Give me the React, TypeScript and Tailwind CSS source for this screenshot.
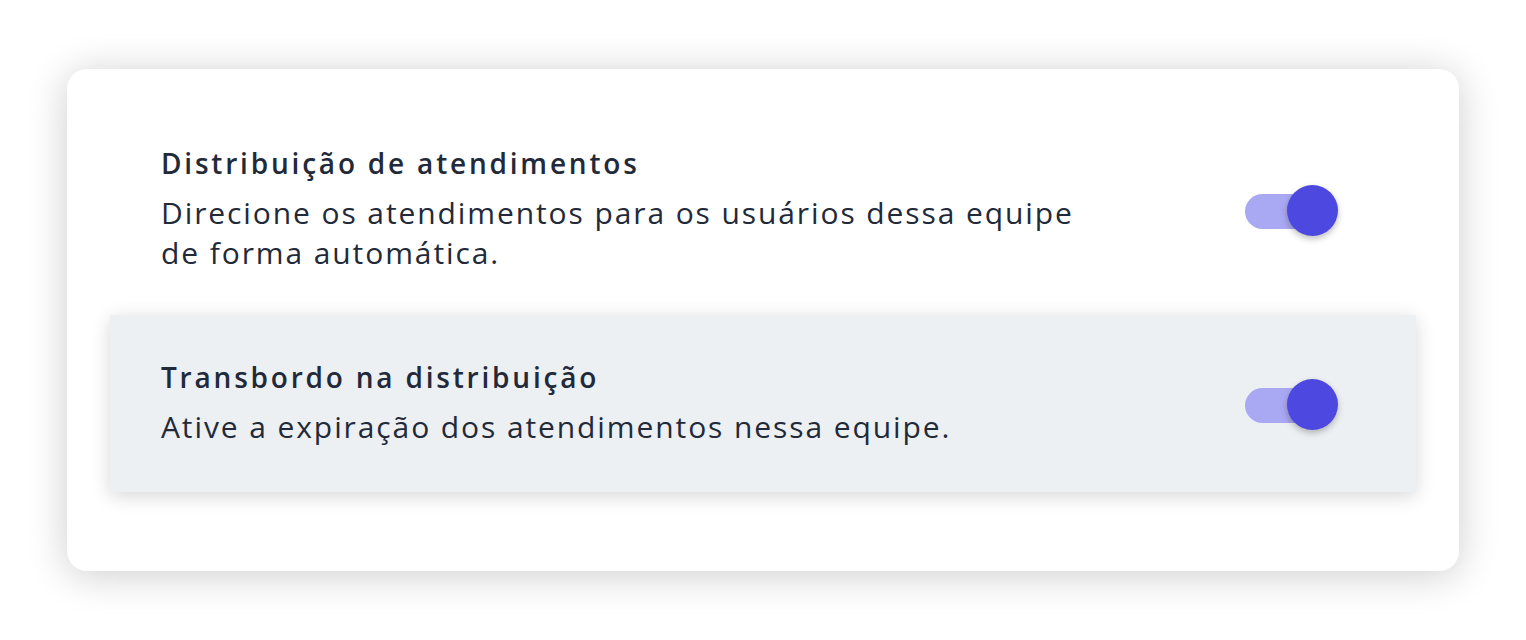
import React, { useState } from "react";

function Toggle({ on, onChange }: { on: boolean; onChange: () => void }) {
  return (
    <button
      onClick={onChange}
      className="relative w-[93px] h-[52px] mt-[6px] flex items-center shrink-0"
    >
      <span
        className={`w-[70px] h-[35px] rounded-full ${
          on ? "bg-[#a9a8f2]" : "bg-[#d3d6dc]"
        }`}
      ></span>
      <span
        className={`absolute top-0 w-[51px] h-[51px] rounded-full shadow-[0_3px_6px_rgba(0,0,0,0.25)] ${
          on ? "left-[42px] bg-[#4c48e0]" : "left-0 bg-white"
        }`}
      ></span>
    </button>
  );
}

function Row({
  title,
  desc,
  on,
  onChange,
  highlight,
}: {
  title: string;
  desc: string;
  on: boolean;
  onChange: () => void;
  highlight?: boolean;
}) {
  return (
    <div
      className={`flex items-center justify-between pl-[51px] pr-[78px] ${
        highlight
          ? "bg-[#edf0f3] shadow-[0_4px_18px_rgba(0,0,0,0.16)] pt-[42px] pb-[45px]"
          : "pt-[42px] pb-[42px]"
      }`}
    >
      <div className="flex flex-col gap-[10px] text-[#222a3a]">
        <p className="text-[28px] leading-[40px] font-semibold tracking-[2.8px]">
          {title}
        </p>
        <p className="text-[30px] leading-[40px] tracking-[1.9px] max-w-[930px]">
          {desc}
        </p>
      </div>
      <Toggle on={on} onChange={onChange} />
    </div>
  );
}

export default function App() {
  const [dist, setDist] = useState(true);
  const [overflow, setOverflow] = useState(true);
  return (
    <div
      className="w-[1526px] h-[640px] bg-white pt-[69px] pl-[67px]"
      style={{ fontFamily: '"Open Sans", sans-serif' }}
    >
      <div className="w-[1392px] h-[502px] bg-white rounded-[20px] shadow-[0_4px_40px_rgba(0,0,0,0.2)] pt-[32px] px-[43px]">
        <Row
          title="Distribuição de atendimentos"
          desc="Direcione os atendimentos para os usuários dessa equipe de forma automática."
          on={dist}
          onChange={() => setDist(!dist)}
        />
        <Row
          title="Transbordo na distribuição"
          desc="Ative a expiração dos atendimentos nessa equipe."
          on={overflow}
          onChange={() => setOverflow(!overflow)}
          highlight
        />
      </div>
    </div>
  );
}
